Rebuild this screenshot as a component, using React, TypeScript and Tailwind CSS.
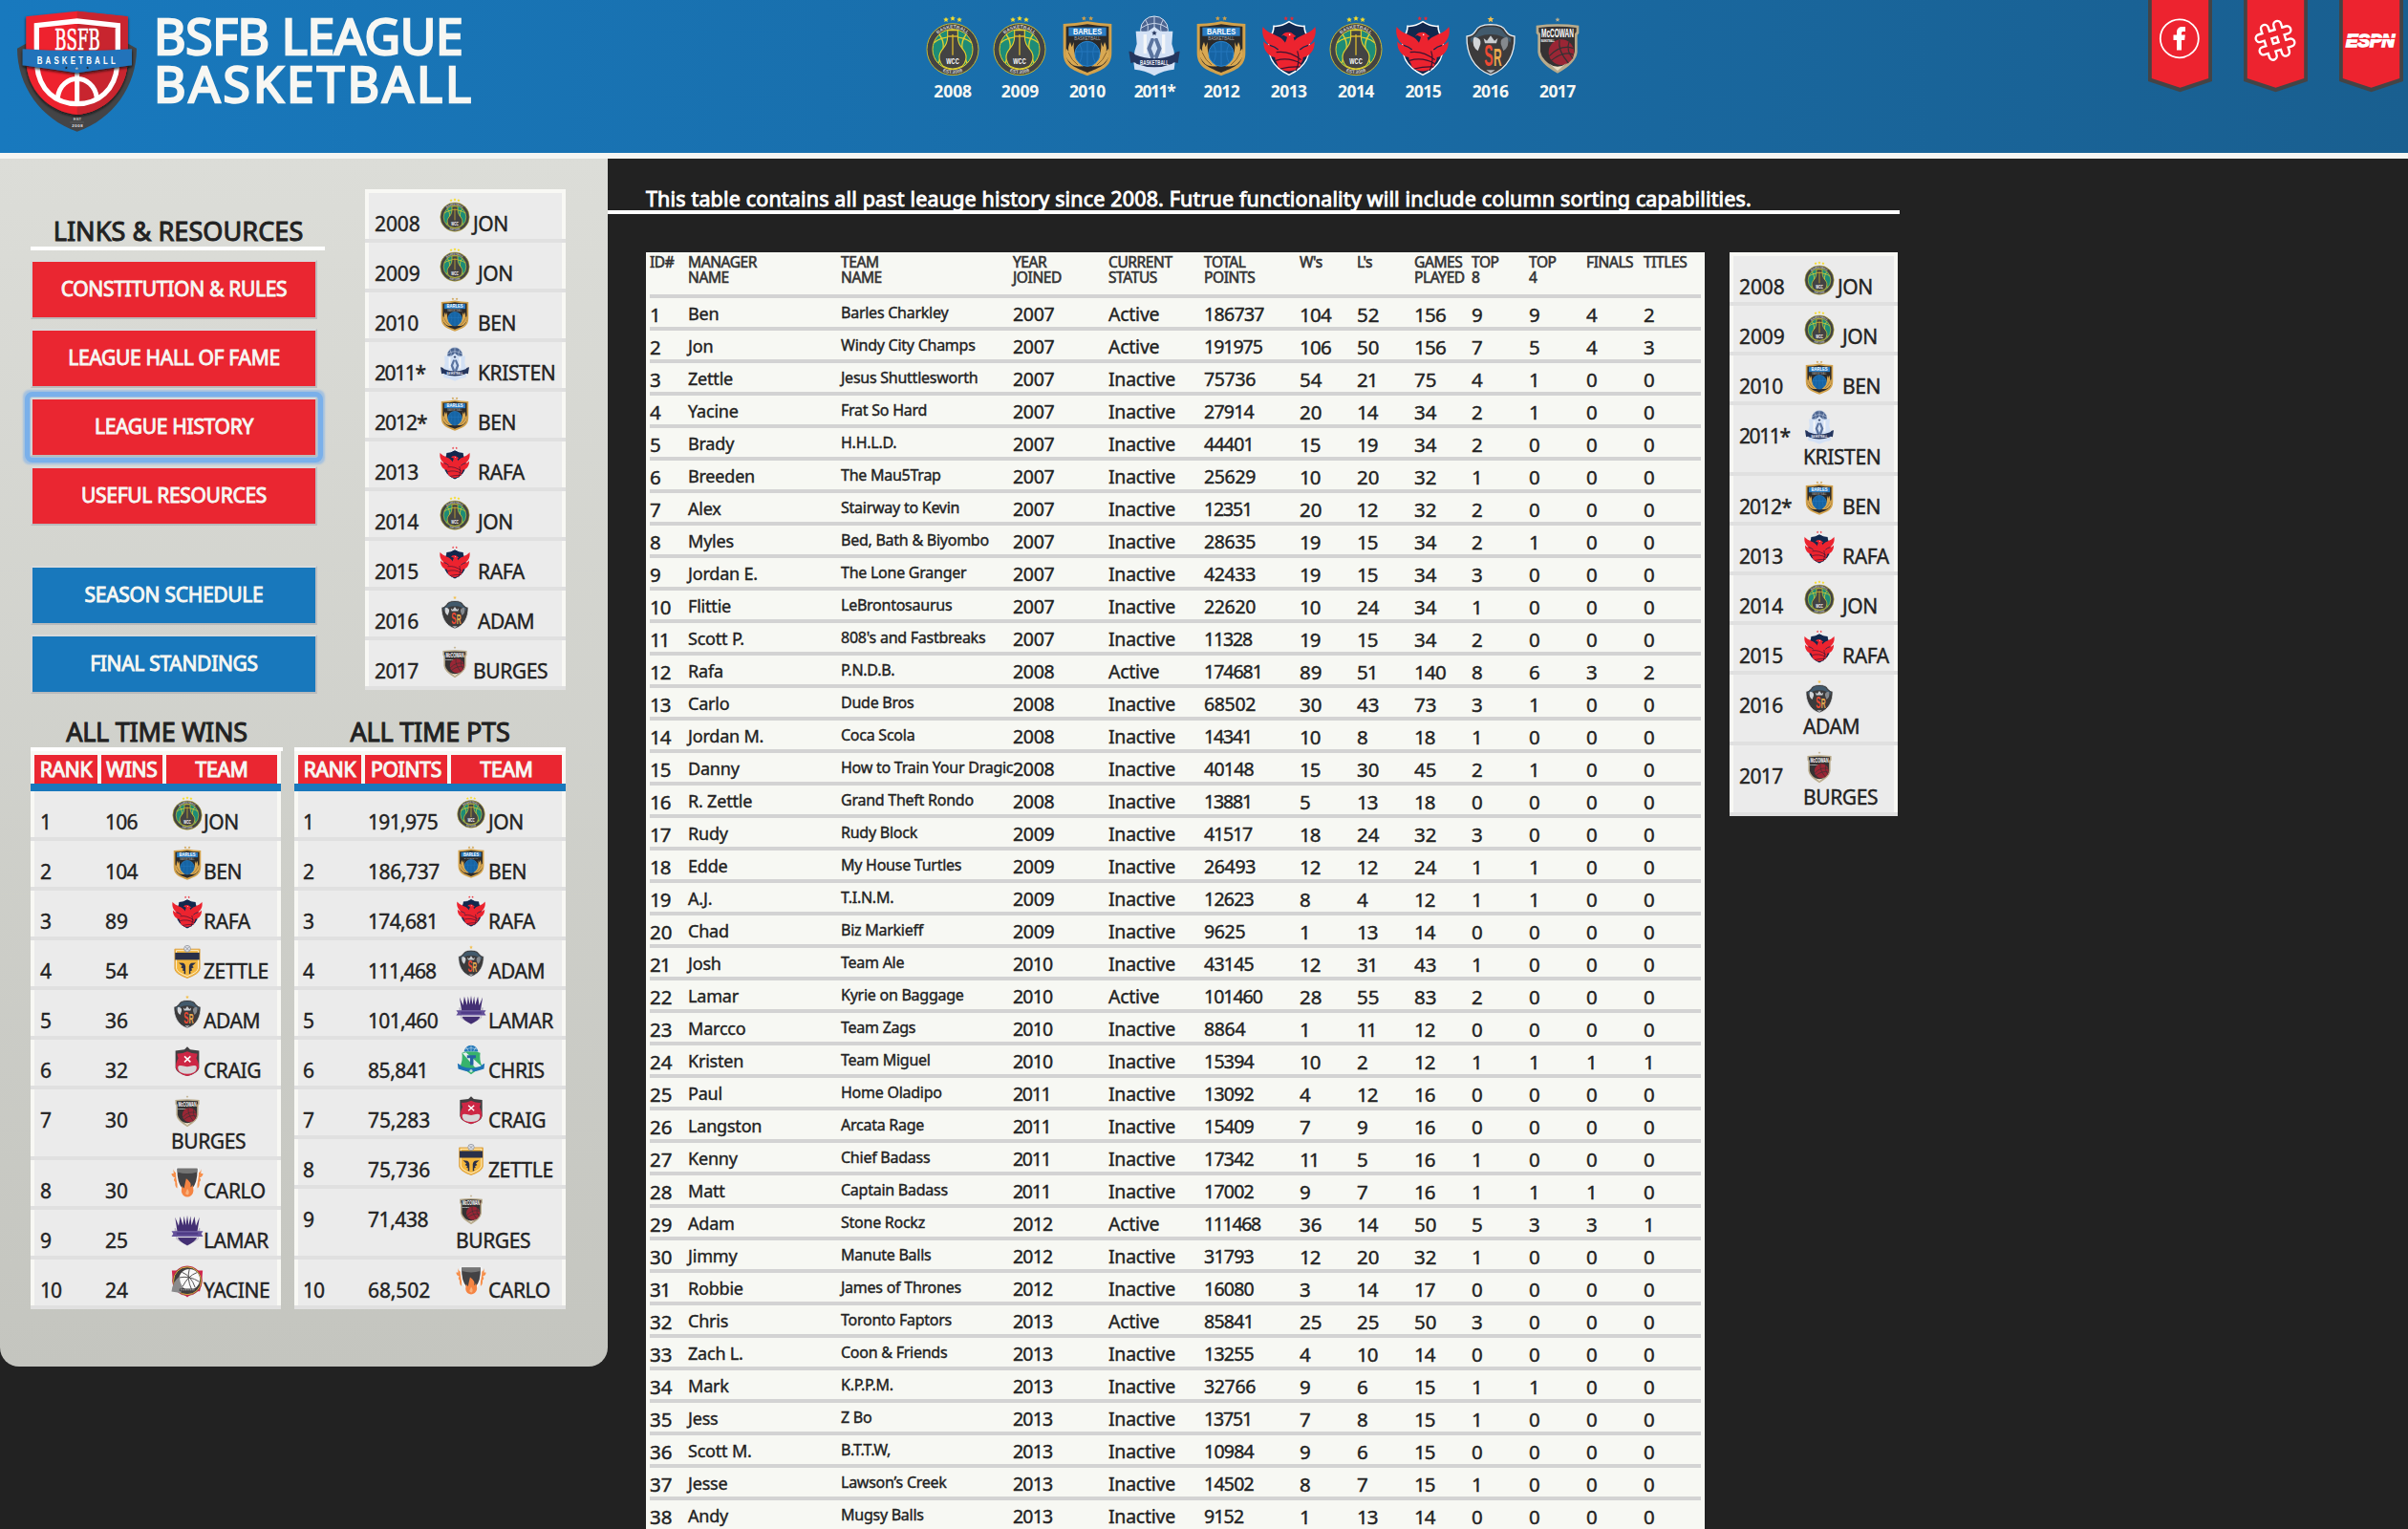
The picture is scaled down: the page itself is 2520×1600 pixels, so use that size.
import React from "react";

const SANS = "font-['Noto_Sans','Open_Sans',sans-serif]";

type IconProps = { className?: string };

function Star({ x, y, r, fill }: { x: number; y: number; r: number; fill: string }) {
  const pts = Array.from({ length: 10 }, (_, i) => {
    const a = -Math.PI / 2 + (i * Math.PI) / 5;
    const d = i % 2 ? r * 0.45 : r;
    return `${(x + d * Math.cos(a)).toFixed(1)},${(y + d * Math.sin(a)).toFixed(1)}`;
  }).join(" ");
  return <polygon points={pts} fill={fill} />;
}

function Crest({ className, children }: IconProps & { children: React.ReactNode }) {
  return (
    <svg viewBox="0 0 180 192" className={className}>
      {children}
    </svg>
  );
}

const LABEL = "Liberation Sans Narrow, Liberation Sans, sans-serif";

function JonCrest({ className }: IconProps) {
  return (
    <Crest className={className}>
      <Star x={69} y={14} r={9} fill="#f7dd2b" />
      <Star x={90} y={10} r={9} fill="#f7dd2b" />
      <Star x={111} y={14} r={9} fill="#f7dd2b" />
      <circle cx="90" cy="107" r="81" fill="#434343" stroke="#c8b732" strokeWidth="3" />
      <circle cx="90" cy="107" r="63" fill="#1d8c77" stroke="#e3cf2f" strokeWidth="3" />
      <path d="M31 86C60 62 120 62 149 86M48 60C70 90 60 115 45 150M132 60C110 90 120 115 135 150" fill="none" stroke="#e3cf2f" strokeWidth="4" />
      <path d="M74 47H106V66C106 90 116 98 126 112C138 130 130 150 120 160Q90 176 60 160C50 150 42 130 54 112C64 98 74 90 74 66Z" fill="#434343" stroke="#e3cf2f" strokeWidth="3.5" />
      <path d="M74 66H106M90 60V125" stroke="#d8b72f" strokeWidth="4" />
      <text x="90" y="154" textAnchor="middle" fontSize="28" fontWeight="700" fontFamily={LABEL} fill="#fff" textLength="40" lengthAdjust="spacingAndGlyphs">WCC</text>
      <path id="jon-top" d="M24 107A66 66 0 0 1 156 107" fill="none" />
      <path id="jon-bottom" d="M14 107A76 76 0 0 0 166 107" fill="none" />
      <text fontSize="15" fontWeight="700" fontFamily={LABEL} fill="#cfcfcf"><textPath href="#jon-top" startOffset="50%" textAnchor="middle">BASKETBALL</textPath></text>
      <text fontSize="15" fontWeight="700" fontFamily={LABEL} fill="#cfcfcf"><textPath href="#jon-bottom" startOffset="50%" textAnchor="middle">EST.2008</textPath></text>
    </Crest>
  );
}

function BenCrest({ className }: IconProps) {
  const wing = "M34 146C20 132 19 118 24 104L31 114C29 104 30 96 36 84L41 100C43 94 45 90 48 84C44 108 50 134 76 160C58 162 42 158 34 146Z";
  return (
    <Crest className={className}>
      <Star x={79} y={10} r={8} fill="#cf9f4a" />
      <Star x={101} y={10} r={8} fill="#cf9f4a" />
      <path d="M14 27Q55 26 90 19Q125 26 166 27V118C166 165 130 174 90 190C50 174 14 165 14 118Z" fill="#d3a24b" />
      <path d="M23 35Q58 34 90 28Q122 34 157 35V118C157 157 125 165 90 180C55 165 23 157 23 118Z" fill="#2b2a2a" />
      <rect x="31" y="38" width="118" height="27" fill="#2b7dc3" />
      <text x="90" y="61" textAnchor="middle" fontSize="28" fontWeight="700" fontFamily={LABEL} fill="#fff" textLength="90" lengthAdjust="spacingAndGlyphs">BARLES</text>
      <text x="90" y="78" textAnchor="middle" fontSize="14" fontFamily={LABEL} fill="#a9a9a9" textLength="82" lengthAdjust="spacingAndGlyphs">BASKETBALL</text>
      <path d={wing} fill="#d9a953" />
      <path d={wing} fill="#d9a953" transform="translate(180 0) scale(-1 1)" />
      <circle cx="90" cy="121" r="39" fill="#1664a4" stroke="#2b86cf" strokeWidth="3" />
      <path d="M90 82V160M52 114H128M66 92Q80 119 66 148M114 92Q100 119 114 148" fill="none" stroke="#2476bb" strokeWidth="3" />
      <path d="M46 116Q48 144 78 161Q56 158 46 142ZM134 116Q132 144 102 161Q124 158 134 142Z" fill="#d9a953" />
      <path d="M30 116Q40 142 60 156M150 116Q140 142 120 156" fill="none" stroke="#8a6228" strokeWidth="3" />
    </Crest>
  );
}

function KristenCrest({ className }: IconProps) {
  return (
    <Crest className={className}>
      <circle cx="90" cy="46" r="43" fill="#4b6490" stroke="#dde7f5" strokeWidth="3" />
      <path d="M90 3V60M48 40Q90 10 132 40M62 14Q76 34 66 60M118 14Q104 34 114 60" fill="none" stroke="#c8d4e8" strokeWidth="3" />
      <path d="M90 36L110 50H148L145 90Q160 130 152 170Q120 172 90 190Q60 172 28 170Q20 130 35 90L32 50H70Z" fill="#d3e1f5" />
      <path d="M56 60H66V120H56ZM114 60H124V120H114Z" fill="#f4f6f8" />
      <Star x={90} y={56} r={9} fill="#26375f" />
      <path d="M80 72H92L80 104L94 138H80L67 104ZM100 72H88L100 104L86 138H100L113 104Z" fill="#5a739f" />
      <path d="M10 113Q22 112 30 124Q90 148 150 124Q158 112 170 113L164 150Q150 144 146 152Q90 174 34 152Q30 144 16 150Z" fill="#25365e" />
      <text x="90" y="156" textAnchor="middle" fontSize="20" fontWeight="700" fontFamily={LABEL} fill="#e9eef7" textLength="90" lengthAdjust="spacingAndGlyphs">BASKETBALL</text>
    </Crest>
  );
}

function RafaCrest({ className }: IconProps) {
  const wing = "M8 36C20 54 42 58 62 70C76 80 84 92 86 112L62 158C48 148 46 140 46 132C28 130 8 112 10 82C14 88 22 94 30 94C14 84 2 60 8 36Z";
  return (
    <Crest className={className}>
      <Star x={80} y={10} r={7} fill="#ee2733" />
      <Star x={99} y={10} r={7} fill="#ee2733" />
      <path d="M90 20Q115 36 138 34Q138 54 150 68C162 120 148 160 90 187C32 160 18 120 30 68Q42 54 42 34Q65 36 90 20Z" fill="#12284d" stroke="#fff" strokeWidth="4.5" />
      <path d={wing} fill="#ec232f" />
      <path d={wing} fill="#ec232f" transform="translate(180 0) scale(-1 1)" />
      <path d="M66 66Q74 50 96 54L112 66L104 70Q106 84 118 96Q136 124 126 160Q92 190 56 162Q42 130 62 106Q80 90 84 68L72 62Z" fill="#ec232f" />
      <path d="M50 116Q90 110 128 140M48 142Q90 130 128 152M62 168Q96 160 124 162M116 112Q126 140 112 174" fill="none" stroke="#3b1430" strokeWidth="3.5" />
      <path d="M30 94Q46 98 56 108M150 94Q134 98 124 108" fill="none" stroke="#12284d" strokeWidth="4" />
      <circle cx="92" cy="61" r="2.5" fill="#fff" />
    </Crest>
  );
}

function AdamCrest({ className }: IconProps) {
  return (
    <Crest className={className}>
      <Star x={90} y={13} r={11} fill="#f3c04f" />
      <path d="M90 29Q130 30 138 50Q146 64 165 66C166 118 146 168 90 187C34 168 14 118 15 66Q34 64 42 50Q50 30 90 29Z" fill="#3c3b3c" stroke="#e8ecef" strokeWidth="4" />
      <path d="M50 52Q58 36 90 36Q122 36 130 52Q138 66 154 72L152 86Q132 60 90 60Q48 60 28 86L26 72Q42 66 50 52Z" fill="#425a6c" />
      <path d="M40 68Q62 72 58 90L50 112Q30 98 36 72Z" fill="#d2d5d9" />
      <path d="M140 68Q118 72 122 90L130 112Q150 98 144 72Z" fill="#85898e" />
      <path d="M68 72L78 80L90 64L102 80L112 72L108 88H72Z" fill="#c9cdd1" />
      <text x="84" y="158" textAnchor="middle" fontSize="92" fontWeight="700" fontFamily={LABEL} fill="#ee4a33" textLength="28" lengthAdjust="spacingAndGlyphs">S</text>
      <text x="112" y="158" textAnchor="middle" fontSize="78" fontWeight="700" fontFamily={LABEL} fill="#e7aa4f" textLength="26" lengthAdjust="spacingAndGlyphs">R</text>
      <path d="M76 172H104L90 182Z" fill="#b8bcc0" />
    </Crest>
  );
}

function BurgesCrest({ className }: IconProps) {
  return (
    <Crest className={className}>
      <Star x={90} y={14} r={8} fill="#c0b08c" />
      <path d="M23 32Q90 24 157 32V56L152 62V116Q148 150 90 182Q32 150 28 116V62L23 56Z" fill="#b9ab8b" />
      <path d="M31 39Q90 32 149 39V52L144 58V114Q140 142 90 172Q40 142 36 114V58L31 52Z" fill="#353233" />
      <circle cx="102" cy="116" r="40" fill="#9a2635" />
      <path d="M64 128Q100 90 140 104M70 142Q110 110 140 124M96 78Q90 110 124 150M126 84Q116 110 138 136" fill="none" stroke="#353233" strokeWidth="3.5" />
      <path d="M60 150Q90 172 120 150L90 174Z" fill="#e9dfc5" />
      <text x="90" y="70" textAnchor="middle" fontSize="36" fontWeight="700" fontFamily={LABEL} fill="#fff" textLength="102" lengthAdjust="spacingAndGlyphs">McCOWAN</text>
      <text x="38" y="85" fontSize="11" fontWeight="700" fontFamily={LABEL} fill="#fff" textLength="42" lengthAdjust="spacingAndGlyphs">BASKETBALL</text>
    </Crest>
  );
}

function ZettleCrest({ className }: IconProps) {
  return (
    <Crest className={className}>
      <path d="M20 22H160V132Q158 160 90 184Q22 160 20 132Z" fill="#f3b73d" stroke="#d5973a" strokeWidth="4" />
      <path d="M29 30H151V130Q148 152 90 174Q32 152 29 130Z" fill="none" stroke="#fff" strokeWidth="4" />
      <circle cx="90" cy="20" r="18" fill="#dfe1e6" stroke="#878b96" strokeWidth="4" />
      <path d="M80 10L100 30M100 10L80 30" stroke="#878b96" strokeWidth="4" />
      <rect x="22" y="42" width="136" height="40" fill="#2a3049" />
      <path d="M42 98L68 100Q78 104 80 118V162L70 156L74 146L62 140L68 132L54 124L62 116Z" fill="#2a3049" />
      <path d="M138 98L112 100Q102 104 100 118V162L110 156L106 146L118 140L112 132L126 124L118 116Z" fill="#2a3049" />
    </Crest>
  );
}

function CraigCrest({ className }: IconProps) {
  return (
    <Crest className={className}>
      <path d="M90 12L106 28L156 34V130Q150 160 90 176Q30 160 24 130V34L74 28Z" fill="#413f41" />
      <path d="M34 50Q60 52 90 38Q120 52 146 50Q146 64 140 76Q160 110 152 136Q134 168 90 176Q46 168 28 136Q20 110 40 76Q34 64 34 50Z" fill="#cd2745" />
      <path d="M38 124Q42 114 62 118L90 124L118 118Q138 114 142 124Q144 146 126 156Q90 172 54 156Q36 146 38 124Z" fill="#d7d6d8" />
      <path d="M74 66L108 98M108 66L74 98" stroke="#fff" strokeWidth="8" />
    </Crest>
  );
}

function CarloCrest({ className }: IconProps) {
  return (
    <Crest className={className}>
      <path d="M12 22Q20 48 34 42V130Q22 124 22 104Q26 96 16 88Q12 76 22 72Q2 66 2 48H14ZM168 22Q160 48 146 42V130Q158 124 158 104Q154 96 164 88Q168 76 158 72Q178 66 178 48H166Z" fill="#f78f4b" />
      <path d="M26 14H154Q158 110 120 142H60Q22 110 26 14Z" fill="#f6f6f6" />
      <path d="M34 20H146Q148 100 116 134H64Q32 100 34 20Z" fill="#434244" />
      <path d="M34 20H146V40Q90 56 34 40Z" fill="#757575" />
      <path d="M84 76Q116 98 108 124Q116 122 118 110Q134 150 112 170Q90 186 68 170Q50 152 62 116Q66 128 72 130Q78 100 84 76Z" fill="#f58443" />
      <path d="M90 132Q104 150 96 166Q84 168 80 158Z" fill="#f9b27e" />
    </Crest>
  );
}

function LamarCrest({ className }: IconProps) {
  return (
    <Crest className={className}>
      <path d="M34 94L22 14L42 62L50 10L66 60L72 8L82 58L90 4L98 58L108 8L114 60L130 10L138 62L158 14L146 94Z" fill="#432f73" />
      <path d="M22 96V76L30 96V136L90 172L150 136V96L158 76V96Z" fill="none" stroke="#a8a3b5" strokeWidth="4" />
      <path d="M36 128H144Q136 150 90 172Q44 150 36 128Z" fill="#432f73" />
      <path d="M2 92H178L168 106L178 122H2L12 106Z" fill="#64519a" />
      <path d="M30 100H150V112H30Z" fill="#4f3b86" />
      <path d="M26 126H154" stroke="#dcdae2" strokeWidth="3" />
    </Crest>
  );
}

function ChrisCrest({ className }: IconProps) {
  return (
    <Crest className={className}>
      <path d="M48 42Q58 4 90 4Q122 4 132 42Z" fill="#2478b9" />
      <path d="M90 4V42M62 16L76 42M118 16L104 42M54 28Q90 12 126 28" fill="none" stroke="#d5e6f3" strokeWidth="3" />
      <path d="M60 42H120L144 50Q138 90 154 130L90 176L26 130Q42 90 36 50Z" fill="#37b36c" />
      <path d="M40 52L60 46L152 128L150 134H112Z" fill="#e9f0ee" />
      <path d="M66 64H118V80H104V122H84V80H66Z" fill="#2463a2" />
      <path d="M10 112Q24 118 34 128Q90 152 146 128Q156 118 170 112L166 144L148 150Q90 172 32 150L14 144Z" fill="#1e73b6" />
      <circle cx="90" cy="156" r="9" fill="#b9e1d0" />
    </Crest>
  );
}

function YacineCrest({ className }: IconProps) {
  return (
    <Crest className={className}>
      <path d="M4 34H60L40 150H20Q8 100 4 34ZM176 34H120L140 150H160Q172 100 176 34ZM60 160H120L90 184Z" fill="#d3254c" />
      <circle cx="90" cy="92" r="82" fill="#3f3d3e" stroke="#d3254c" strokeWidth="4" />
      <circle cx="90" cy="92" r="77" fill="none" stroke="#e8b23a" strokeWidth="5" />
      <circle cx="102" cy="84" r="58" fill="#fafafa" />
      <path d="M102 26Q86 80 114 140M46 74Q102 62 158 98M60 44Q112 64 134 130M144 46Q94 64 64 124" fill="none" stroke="#4b494a" strokeWidth="5" />
      <path d="M48 66Q8 96 2 152L52 160L66 128Q46 100 48 66Z" fill="#8a8a8c" />
      <rect x="46" y="136" width="92" height="14" fill="#3f3d3e" />
      <path d="M52 143H132" stroke="#d4d4d4" strokeWidth="4" strokeDasharray="6 3" />
    </Crest>
  );
}

const CRESTS: Record<string, (p: IconProps) => React.ReactElement> = {
  JON: JonCrest,
  BEN: BenCrest,
  KRISTEN: KristenCrest,
  RAFA: RafaCrest,
  ADAM: AdamCrest,
  BURGES: BurgesCrest,
  ZETTLE: ZettleCrest,
  CRAIG: CraigCrest,
  CARLO: CarloCrest,
  LAMAR: LamarCrest,
  CHRIS: ChrisCrest,
  YACINE: YacineCrest,
};

function LeagueLogo() {
  return (
    <svg viewBox="0 0 420 420" className="h-[140px] w-[140px] shrink-0">
      <defs>
        <filter id="soft" x="-10%" y="-10%" width="120%" height="130%">
          <feDropShadow dx="0" dy="5" stdDeviation="4" floodColor="#111" floodOpacity="0.9" />
        </filter>
      </defs>
      <path d="M24 152L54 136H370L399 152C399 268 326 374 212 413C98 374 24 268 24 152Z" fill="#444446" />
      <g filter="url(#soft)">
        <path d="M52 52L212 35L371 52V186C371 282 300 352 212 360C124 352 52 282 52 186Z" fill="#ee232f" />
      </g>
      <path d="M212 35L371 52V186C371 282 300 352 212 360Z" fill="#c8252f" />
      <path d="M85 165V80L212 66L340 80V165" fill="none" stroke="#fff" strokeWidth="16" />
      <path d="M86 205C92 282 145 326 212 326C279 326 332 282 338 205" fill="none" stroke="#fff" strokeWidth="16" />
      <path d="M212 220V326M151 306C162 228 262 228 274 306" fill="none" stroke="#fff" strokeWidth="15" />
      <text x="213" y="156" textAnchor="middle" fontSize="88" fontWeight="400" fontFamily="DejaVu Serif, serif" fill="#fff" stroke="#fff" strokeWidth="2" textLength="142" lengthAdjust="spacingAndGlyphs">BSFB</text>
      <g filter="url(#soft)">
        <path d="M41 154Q212 166 384 154V205Q300 216 212 229Q125 216 41 205Z" fill="#2273ba" />
      </g>
      <g transform="translate(86 200) scale(0.72 1)">
        <text x="0" y="0" fontSize="33" fontWeight="700" fontFamily={LABEL} fill="#fff" textLength="342">BASKETBALL</text>
      </g>
      <Star x={178} y={213} r={5} fill="#222" />
      <Star x={211} y={215} r={6} fill="#b5b5b5" />
      <Star x={245} y={213} r={5} fill="#222" />
      <text x="213" y="379" textAnchor="middle" fontSize="13" fontFamily={LABEL} fill="#e5e5e5">EST</text>
      <text x="213" y="399" textAnchor="middle" fontSize="13" fontWeight="700" fontFamily={LABEL} fill="#e5e5e5" textLength="34">2008</text>
      <path d="M190 384H234" stroke="#666" strokeWidth="2" />
    </svg>
  );
}

function Ribbon({ children }: { children: React.ReactNode }) {
  return (
    <svg viewBox="0 0 67 97" className="h-[97px] w-[67px]">
      <path d="M0 0H67V85L33.5 96.3L0 85Z" fill="#444446" />
      <path d="M3.8 0H63.2V82L33.5 91.8L3.8 82Z" fill="#ed232f" />
      {children}
    </svg>
  );
}

const HASH = "M-6.9 -15V15M6.9 -15V15M-15 -6.9H15M-15 6.9H15";

function Header() {
  const champs: [string, string][] = [
    ["2008", "JON"], ["2009", "JON"], ["2010", "BEN"], ["2011*", "KRISTEN"], ["2012", "BEN"],
    ["2013", "RAFA"], ["2014", "JON"], ["2015", "RAFA"], ["2016", "ADAM"], ["2017", "BURGES"],
  ];
  return (
    <header className="flex h-[166px] border-b-6 border-[#f5f5f2] bg-linear-to-r from-[#1879be] to-[#195f90]">
      <div className="flex w-[962px] pl-[10px]">
        <LeagueLogo />
        <h1 className="pt-3 pl-[11px] text-[51.5px] leading-[50px] text-[#f7f7f3] [-webkit-text-stroke:2.4px]">
          <span className="block tracking-[-0.3px]">BSFB LEAGUE</span>
          <span className="block tracking-[3.1px]">BASKETBALL</span>
        </h1>
      </div>
      <ul className="flex w-[703px] pt-4">
        {champs.map(([year, name]) => {
          const Icon = CRESTS[name];
          return (
            <li key={year} className="flex flex-1 flex-col items-center">
              <Icon className="h-16 w-[60px]" />
              <span
                className="mt-[3px] text-[17.5px] leading-6 font-bold text-[#f7f7f3] [-webkit-text-stroke:0px]"
                style={{ letterSpacing: spacing(year, -0.1) }}
              >
                {year}
              </span>
            </li>
          );
        })}
      </ul>
      <nav className="ml-auto flex gap-[33px] pr-[5px]">
        <Ribbon>
          <circle cx="32.8" cy="40.3" r="20" fill="none" stroke="#fff" strokeWidth="1.8" />
          <path d="M30 52.5V42H26.5V36.5H30V34C30 29.8 32.4 28 36 28H39V33H37C35.4 33 35 33.6 35 35V36.5H38.8L38.2 42H35V52.5Z" fill="#fff" />
        </Ribbon>
        <Ribbon>
          <g transform="translate(33 42.3) rotate(-17)" fill="none" strokeLinecap="round">
            <path d={HASH} stroke="#fff" strokeWidth="10.4" />
            <path d={HASH} stroke="#ed232f" strokeWidth="5.6" />
          </g>
        </Ribbon>
        <Ribbon>
          <text x="7" y="49.3" fontSize="17.5" fontWeight="700" fontStyle="italic" fontFamily="Liberation Sans, sans-serif" fill="#fff" stroke="#fff" strokeWidth="1.5" textLength="51" lengthAdjust="spacingAndGlyphs">ESPN</text>
          <path d="M5 40.3H62" stroke="#ed232f" strokeWidth="1.2" />
        </Ribbon>
      </nav>
    </header>
  );
}

/* Narrow glyphs ("1", "*") pull a number's tracking in. */
function spacing(text: string, base: number) {
  const ones = text.split("1").length - 1;
  const stars = text.includes("*") ? 1 : 0;
  return `${(base - (ones * 2 + stars * 2.5) / text.length).toFixed(2)}px`;
}

type BoardRow = { cells: string[]; team: string; wrap?: boolean; tight?: boolean };

type BoardStyle = { pad: string; cols: string[]; icon: string; gap: string; tightGap?: string };

function Board({ rows, style }: { rows: BoardRow[]; style: BoardStyle }) {
  return (
    <div>
      {rows.map((row, i) => {
        const Icon = CRESTS[row.team];
        return (
          <div key={i} className={`border-b-4 border-[#e0e0e0] ${row.wrap ? "h-[74px]" : "h-[52px]"}`}>
            <div className={`flex h-full border-x-4 border-[#f8f8f4] bg-[#ebebeb] text-[21px] leading-6 text-[#222] ${style.pad}`}>
              {row.cells.map((c, j) => (
                <div key={j} className={`shrink-0 pt-5 ${style.cols[j]}`} style={{ letterSpacing: spacing(c, -0.1) }}>{c}</div>
              ))}
              <div className={`flex whitespace-nowrap tracking-[-0.4px] ${row.wrap ? "flex-col" : ""}`}>
                <Icon className={`mt-[5px] shrink-0 ${style.icon}`} />
                <span className={row.wrap ? "mt-px" : `pt-5 ${row.tight ? style.tightGap : style.gap}`}>{row.team}</span>
              </div>
            </div>
          </div>
        );
      })}
    </div>
  );
}

function champRows(wrapped: string[], tight: number[]): BoardRow[] {
  const list: [string, string][] = [
    ["2008", "JON"], ["2009", "JON"], ["2010", "BEN"], ["2011*", "KRISTEN"], ["2012*", "BEN"],
    ["2013", "RAFA"], ["2014", "JON"], ["2015", "RAFA"], ["2016", "ADAM"], ["2017", "BURGES"],
  ];
  return list.map(([y, t], i) => ({ cells: [y], team: t, wrap: wrapped.includes(t), tight: tight.includes(i) }));
}

const CHAMP_STYLE: BoardStyle = { pad: "pl-[6px]", cols: ["w-[67px]"], icon: "h-9 w-[34px]", gap: "pl-[7px]", tightGap: "pl-[2px]" };

const WINS: BoardRow[] = [
  ["1", "106", "JON"], ["2", "104", "BEN"], ["3", "89", "RAFA"], ["4", "54", "ZETTLE"], ["5", "36", "ADAM"],
  ["6", "32", "CRAIG"], ["7", "30", "BURGES"], ["8", "30", "CARLO"], ["9", "25", "LAMAR"], ["10", "24", "YACINE"],
].map(([a, b, t]) => ({ cells: [a, b], team: t, wrap: t === "BURGES" }));

const POINTS: BoardRow[] = [
  ["1", "191,975", "JON"], ["2", "186,737", "BEN"], ["3", "174,681", "RAFA"], ["4", "111,468", "ADAM"], ["5", "101,460", "LAMAR"],
  ["6", "85,841", "CHRIS"], ["7", "75,283", "CRAIG"], ["8", "75,736", "ZETTLE"], ["9", "71,438", "BURGES"], ["10", "68,502", "CARLO"],
].map(([a, b, t]) => ({ cells: [a, b], team: t, wrap: t === "BURGES" }));

function BoardHead({ labels, widths }: { labels: string[]; widths: string[] }) {
  return (
    <div className="h-[42px] border-b-8 border-[#1878bc]">
      <div className="flex h-full gap-1 bg-[#f8f8f4] px-1 pt-1">
        {labels.map((l, i) => (
          <div key={l} className={`bg-[#ea2631] text-center text-[21px] leading-[31px] tracking-[-0.2px] text-[#f7f7f3] [-webkit-text-stroke:1.1px] ${widths[i]}`}>{l}</div>
        ))}
      </div>
    </div>
  );
}

function LinkButton({ label, tone = "bg-[#ea2631]", focused }: { label: string; tone?: string; focused?: boolean }) {
  return (
    <button
      className={`block h-[62px] w-[300px] border-2 border-t-[#d9dadb] border-r-[#bdbec0] border-b-[#b9babb] border-l-[#d2d3d4] pb-[2px] text-[21px] leading-none tracking-[-0.3px] text-[#f7f7f3] [-webkit-text-stroke:0.9px] ${tone} ${
        focused ? "rounded-[2px] shadow-[0_0_2px_8px_#a3c1e0] [outline:5px_solid_#7ab0ea] [outline-offset:1px]" : ""
      }`}
    >
      {label}
    </button>
  );
}

function Sidebar() {
  return (
    <aside className="h-[1264px] w-[636px] shrink-0 rounded-b-[20px] bg-linear-to-b from-[#dcddd8] to-[#c4c5bf] pt-8 pl-8">
      <div className="flex h-[558px]">
        <div className="w-[350px]">
          <div className="h-16 w-[308px] border-b-4 border-white pt-[27px] pl-px text-center">
            <h2 className="text-[27px] leading-[34px] tracking-[0.08px] whitespace-nowrap text-[#222] [-webkit-text-stroke:1px]">LINKS &amp; RESOURCES</h2>
          </div>
          <div className="flex flex-col gap-[10px] pt-[10px]">
            <LinkButton label="CONSTITUTION & RULES" />
            <LinkButton label="LEAGUE HALL OF FAME" />
            <LinkButton label="LEAGUE HISTORY" focused />
            <LinkButton label="USEFUL RESOURCES" />
          </div>
          <div className="flex flex-col gap-[10px] pt-[42px]">
            <LinkButton label="SEASON SCHEDULE" tone="bg-[#1878bc]" />
            <LinkButton label="FINAL STANDINGS" tone="bg-[#1878bc]" />
          </div>
        </div>
        <div className="w-[210px]">
          <div className="h-1 bg-[#f8f8f4]" />
          <Board rows={champRows([], [0, 9])} style={CHAMP_STYLE} />
        </div>
      </div>
      <div className="flex gap-[12px] text-[#222]">
        <div className="w-[264px]">
          <h2 className="h-[30px] border-b-4 border-white text-center text-[27px] leading-[20px] tracking-[-0.25px] [-webkit-text-stroke:1px]">ALL TIME WINS</h2>
          <div className="w-[262px]">
            <BoardHead labels={["RANK", "WINS", "TEAM"]} widths={["w-[66px]", "w-[64px]", "w-[116px]"]} />
            <Board rows={WINS} style={{ pad: "pl-[6px]", cols: ["w-[68px]", "w-[69px]"], icon: "h-9 w-[34px]", gap: "" }} />
          </div>
        </div>
        <div className="w-[284px]">
          <h2 className="h-[30px] border-b-4 border-white text-center text-[27px] leading-[20px] tracking-[-0.2px] [-webkit-text-stroke:1px]">ALL TIME PTS</h2>
          <BoardHead labels={["RANK", "POINTS", "TEAM"]} widths={["w-[66px]", "w-[86px]", "w-[116px]"]} />
          <Board rows={POINTS} style={{ pad: "pl-[5px]", cols: ["w-[68px]", "w-[92px]"], icon: "h-[34px] w-8 mb-[2px]", gap: "pl-[2px]" }} />
        </div>
      </div>
    </aside>
  );
}

const HISTORY = `Ben|Barles Charkley|2007|Active|186737|104|52|156|9|9|4|2
Jon|Windy City Champs|2007|Active|191975|106|50|156|7|5|4|3
Zettle|Jesus Shuttlesworth|2007|Inactive|75736|54|21|75|4|1|0|0
Yacine|Frat So Hard|2007|Inactive|27914|20|14|34|2|1|0|0
Brady|H.H.L.D.|2007|Inactive|44401|15|19|34|2|0|0|0
Breeden|The Mau5Trap|2007|Inactive|25629|10|20|32|1|0|0|0
Alex|Stairway to Kevin|2007|Inactive|12351|20|12|32|2|0|0|0
Myles|Bed, Bath & Biyombo|2007|Inactive|28635|19|15|34|2|1|0|0
Jordan E.|The Lone Granger|2007|Inactive|42433|19|15|34|3|0|0|0
Flittie|LeBrontosaurus|2007|Inactive|22620|10|24|34|1|0|0|0
Scott P.|808's and Fastbreaks|2007|Inactive|11328|19|15|34|2|0|0|0
Rafa|P.N.D.B.|2008|Active|174681|89|51|140|8|6|3|2
Carlo|Dude Bros|2008|Inactive|68502|30|43|73|3|1|0|0
Jordan M.|Coca Scola|2008|Inactive|14341|10|8|18|1|0|0|0
Danny|How to Train Your Dragic|2008|Inactive|40148|15|30|45|2|1|0|0
R. Zettle|Grand Theft Rondo|2008|Inactive|13881|5|13|18|0|0|0|0
Rudy|Rudy Block|2009|Inactive|41517|18|24|32|3|0|0|0
Edde|My House Turtles|2009|Inactive|26493|12|12|24|1|1|0|0
A.J.|T.I.N.M.|2009|Inactive|12623|8|4|12|1|1|0|0
Chad|Biz Markieff|2009|Inactive|9625|1|13|14|0|0|0|0
Josh|Team Ale|2010|Inactive|43145|12|31|43|1|0|0|0
Lamar|Kyrie on Baggage|2010|Active|101460|28|55|83|2|0|0|0
Marcco|Team Zags|2010|Inactive|8864|1|11|12|0|0|0|0
Kristen|Team Miguel|2010|Inactive|15394|10|2|12|1|1|1|1
Paul|Home Oladipo|2011|Inactive|13092|4|12|16|0|0|0|0
Langston|Arcata Rage|2011|Inactive|15409|7|9|16|0|0|0|0
Kenny|Chief Badass|2011|Inactive|17342|11|5|16|1|0|0|0
Matt|Captain Badass|2011|Inactive|17002|9|7|16|1|1|1|0
Adam|Stone Rockz|2012|Active|111468|36|14|50|5|3|3|1
Jimmy|Manute Balls|2012|Inactive|31793|12|20|32|1|0|0|0
Robbie|James of Thrones|2012|Inactive|16080|3|14|17|0|0|0|0
Chris|Toronto Faptors|2013|Active|85841|25|25|50|3|0|0|0
Zach L.|Coon & Friends|2013|Inactive|13255|4|10|14|0|0|0|0
Mark|K.P.P.M.|2013|Inactive|32766|9|6|15|1|1|0|0
Jess|Z Bo|2013|Inactive|13751|7|8|15|1|0|0|0
Scott M.|B.T.T.W,|2013|Inactive|10984|9|6|15|0|0|0|0
Jesse|Lawson’s Creek|2013|Inactive|14502|8|7|15|1|0|0|0
Andy|Mugsy Balls|2013|Inactive|9152|1|13|14|0|0|0|0`
  .split("\n")
  .map((line) => line.split("|"));

const GRID = "grid grid-cols-[40px_160px_180px_100px_100px_100px_repeat(7,60px)] whitespace-nowrap";

const NUM = "pt-1 text-[20.5px]";
const MID = "pt-[3.5px] text-[19.5px]";
const CELL = ["pt-[2.5px] text-[18px]", "pt-[1.5px] text-[16px]", MID, MID, MID];
const TRACK = [-0.2, -0.25, -0.3, -0.25, -0.35];

const HEADS = [["ID#"], ["MANAGER", "NAME"], ["TEAM", "NAME"], ["YEAR", "JOINED"], ["CURRENT", "STATUS"], ["TOTAL", "POINTS"],
  ["W's"], ["L's"], ["GAMES", "PLAYED"], ["TOP", "8"], ["TOP", "4"], ["FINALS"], ["TITLES"]];

function HistoryTable() {
  return (
    <div className="w-[1108px] bg-[#f7f8f3] px-1 text-[#222]">
      <div className={`h-12 border-b-4 border-[#d3d3d3] pt-[2px] text-[15.5px] leading-4 tracking-[-0.4px] text-[#333] [-webkit-text-stroke:0.6px] ${GRID}`}>
        {HEADS.map((h, i) => (
          <div key={i}>{h.map((l) => <div key={l}>{l}</div>)}</div>
        ))}
      </div>
      {HISTORY.map((row, i) => (
        <div key={i} className={`h-[34px] overflow-hidden border-b-4 border-[#d3d3d3] leading-[26px] ${GRID}`}>
          <div className={NUM} style={{ letterSpacing: spacing(String(i + 1), 0) }}>{i + 1}</div>
          {row.map((c, j) => (
            <div key={j} className={CELL[j] ?? NUM} style={{ letterSpacing: spacing(c, TRACK[j] ?? 0) }}>{c}</div>
          ))}
        </div>
      ))}
    </div>
  );
}

export default function App() {
  return (
    <div className={`h-[1600px] w-[2520px] overflow-hidden bg-[#222] [-webkit-text-stroke:0.4px] ${SANS}`}>
      <Header />
      <div className="flex">
        <Sidebar />
        <main>
          <p className="h-[58px] w-[1352px] border-b-4 border-white pt-[30px] pl-10 text-[21.5px] leading-6 tracking-[0.16px] whitespace-nowrap text-white [-webkit-text-stroke:0.9px]">
            This table contains all past leauge history since 2008. Futrue functionality will include column sorting capabilities.
          </p>
          <div className="flex items-start gap-[26px] pt-10 pl-10">
            <HistoryTable />
            <div className="w-[176px]">
              <div className="h-1 bg-[#f8f8f4]" />
              <Board rows={champRows(["KRISTEN", "ADAM", "BURGES"], [0])} style={CHAMP_STYLE} />
            </div>
          </div>
        </main>
      </div>
    </div>
  );
}
